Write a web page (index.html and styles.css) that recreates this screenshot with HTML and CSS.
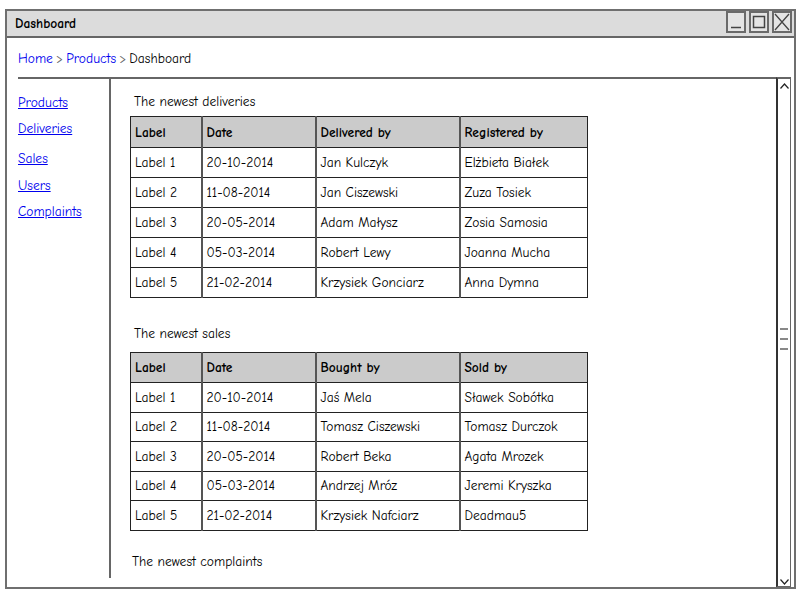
FILE: index.html
```html
<!DOCTYPE html>
<html>
<head>
<meta charset="utf-8">
<link rel="stylesheet" href="styles.css">
</head>
<body>
<div class="window">
  <div class="titlebar">
    <span class="title">Dashboard</span>
    <div class="controls">
      <span class="ctl"><svg width="16" height="18" viewBox="0 0 16 18"><path d="M3 14.5h10" stroke="#444" stroke-width="1.5" fill="none"/></svg></span>
      <span class="ctl"><svg width="16" height="18" viewBox="0 0 16 18"><rect x="2.5" y="3.5" width="11" height="11" stroke="#444" stroke-width="1.5" fill="none"/></svg></span>
      <span class="ctl"><svg width="16" height="18" viewBox="0 0 16 18"><path d="M1 1L15 17M15 1L1 17" stroke="#444" stroke-width="1.3" fill="none"/></svg></span>
    </div>
  </div>
  <div class="body">
    <div class="crumbs"><a class="crumb">Home</a><span class="sep">&gt;</span><a class="crumb">Products</a><span class="sep">&gt;</span><span>Dashboard</span></div>
    <div class="main">
      <div class="panel">
        <nav class="sidebar">
          <a class="nav n1">Products</a>
          <a class="nav n2">Deliveries</a>
          <a class="nav n3">Sales</a>
          <a class="nav n4">Users</a>
          <a class="nav n5">Complaints</a>
        </nav>
        <div class="content">
          <div class="heading h1">The newest deliveries</div>
          <table class="grid t1">
            <colgroup><col class="c1"><col class="c2"><col class="c3"><col class="c4"></colgroup>
            <tr class="head"><th>Label</th><th>Date</th><th>Delivered by</th><th>Registered by</th></tr>
            <tr><td>Label 1</td><td>20-10-2014</td><td>Jan Kulczyk</td><td>Elżbieta Białek</td></tr>
            <tr><td>Label 2</td><td>11-08-2014</td><td>Jan Ciszewski</td><td>Zuza Tosiek</td></tr>
            <tr><td>Label 3</td><td>20-05-2014</td><td>Adam Małysz</td><td>Zosia Samosia</td></tr>
            <tr><td>Label 4</td><td>05-03-2014</td><td>Robert Lewy</td><td>Joanna Mucha</td></tr>
            <tr><td>Label 5</td><td>21-02-2014</td><td>Krzysiek Gonciarz</td><td>Anna Dymna</td></tr>
          </table>
          <div class="heading h2">The newest sales</div>
          <table class="grid t2">
            <colgroup><col class="c1"><col class="c2"><col class="c3"><col class="c4"></colgroup>
            <tr class="head"><th>Label</th><th>Date</th><th>Bought by</th><th>Sold by</th></tr>
            <tr><td>Label 1</td><td>20-10-2014</td><td>Jaś Mela</td><td>Sławek Sobótka</td></tr>
            <tr><td>Label 2</td><td>11-08-2014</td><td>Tomasz Ciszewski</td><td>Tomasz Durczok</td></tr>
            <tr><td>Label 3</td><td>20-05-2014</td><td>Robert Beka</td><td>Agata Mrozek</td></tr>
            <tr><td>Label 4</td><td>05-03-2014</td><td>Andrzej Mróz</td><td>Jeremi Kryszka</td></tr>
            <tr><td>Label 5</td><td>21-02-2014</td><td>Krzysiek Nafciarz</td><td>Deadmau5</td></tr>
          </table>
          <div class="heading h3">The newest complaints</div>
        </div>
      </div>
      <div class="scroll">
        <svg class="arrow" width="11" height="8" viewBox="0 0 11 8"><path d="M1.5 6.5L5.5 2L9.5 6.5" stroke="#222" stroke-width="1.2" fill="none"/></svg>
        <div class="grip"><i></i><i></i><i></i></div>
        <svg class="arrow" width="11" height="8" viewBox="0 0 11 8"><path d="M1.5 1.5L5.5 6L9.5 1.5" stroke="#222" stroke-width="1.2" fill="none"/></svg>
      </div>
    </div>
  </div>
</div>
</body>
</html>
```
FILE: styles.css
```css
html, body { margin: 0; padding: 0; background: #fff; }
body {
  padding: 9px 4px 0 5px;
  font-family: "Comic Sans MS", "Comic Neue", "DejaVu Sans", sans-serif;
  font-size: 13.5px;
  color: #000;
}
.window {
  width: 791px;
  height: 580px;
  box-sizing: border-box;
  border: 2px solid #6f6f6f;
  display: flex;
  flex-direction: column;
}
.titlebar {
  height: 27px;
  box-sizing: border-box;
  background: #dcdcdc;
  border-bottom: 2px solid #666;
  display: flex;
  align-items: center;
  justify-content: space-between;
  padding: 0 2px 0 8px;
}
.title { font-weight: bold; font-size: 13.5px; }
.controls { display: flex; gap: 3px; align-self: flex-start; }
.ctl {
  width: 20px; height: 22px; box-sizing: border-box;
  border: 2px solid #6a6a6a;
  display: flex; align-items: center; justify-content: center;
  background: #e4e4e4;
}
.body { flex: 1; display: flex; flex-direction: column; }
.crumbs {
  height: 39px;
  box-sizing: border-box;
  padding: 13px 0 0 11px;
  line-height: 16px;
}
.crumb { color: #0000ee; }
.sep { color: #666; margin: 0 3px; }
.main { flex: 1; display: flex; }
.panel {
  flex: 1;
  margin: 0 0 9px 11px;
  border-top: 2px solid #666;
  display: flex;
}
.sidebar {
  width: 91px;
  border-right: 2px solid #666;
  padding-top: 16px;
  display: flex;
  flex-direction: column;
  align-items: flex-start;
}
.nav { color: #0000ee; text-decoration: underline; line-height: 16px; }
.n2 { margin-top: 10px; }
.n3 { margin-top: 14px; }
.n4 { margin-top: 11px; }
.n5 { margin-top: 10px; }
.content { flex: 1; padding: 15px 0 0 19px; }
.heading { line-height: 16px; padding-left: 4px; }
.h1 { margin-bottom: 6px; }
.h2 { margin-top: 28px; margin-bottom: 10px; }
.h3 { margin-top: 23px; padding-left: 2px; }
.grid {
  border-collapse: collapse;
  table-layout: fixed;
  width: 458px;
  color: #000;
}
.grid .c1 { width: 71px; }
.grid .c2 { width: 114px; }
.grid .c3 { width: 144px; }
.grid .c4 { width: 128px; }
.grid th, .grid td {
  border: 1px solid #222;
  text-align: left;
  padding: 0 4px;
  white-space: nowrap;
  overflow: hidden;
}
.grid th { background: #cbcbcb; font-weight: bold; }
.t1 th { height: 30px; }
.t1 td { height: 29px; }
.t2 th { height: 29px; }
.t2 td { height: 28.5px; }
.grid th + th, .grid td + td { border-left: 2px solid #555; }
.scroll {
  width: 15px;
  box-sizing: border-box;
  border: 1px solid #666;
  border-left: 2px solid #333;
  border-top-width: 2px;
  margin-right: 3px;
  display: flex;
  flex-direction: column;
  align-items: center;
  justify-content: space-between;
  padding: 3px 0 0;
}
.grip { display: flex; flex-direction: column; gap: 8px; margin-top: 10px; }
.grip i { display: block; width: 8px; height: 2px; background: #888; }
```
